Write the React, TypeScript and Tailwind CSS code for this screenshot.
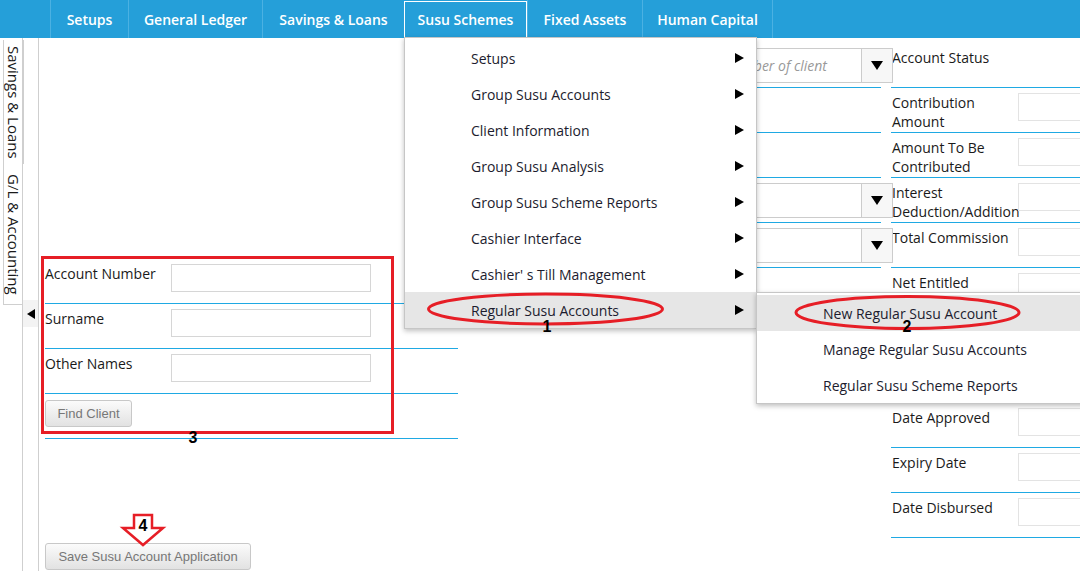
import type { ReactNode } from 'react';

const navItems = [
  { label: 'Setups', w: 'w-[78px]' },
  { label: 'General Ledger', w: 'w-[134px]' },
  { label: 'Savings & Loans', w: 'w-[142px]' },
  { label: 'Susu Schemes', w: 'w-[123px]', active: true },
  { label: 'Fixed Assets', w: 'w-[115px]' },
  { label: 'Human Capital', w: 'w-[131px]' },
];

const menuItems = [
  'Setups',
  'Group Susu Accounts',
  'Client Information',
  'Group Susu Analysis',
  'Group Susu Scheme Reports',
  'Cashier Interface',
  "Cashier' s Till Management",
  'Regular Susu Accounts',
];

const subItems = ['New Regular Susu Account', 'Manage Regular Susu Accounts', 'Regular Susu Scheme Reports'];

const rightRows: { key: string; label: ReactNode; input: boolean }[] = [
  { key: 'status', label: 'Account Status', input: false },
  { key: 'contrib', label: <>Contribution<br />Amount</>, input: true },
  { key: 'tobe', label: <>Amount To Be<br />Contributed</>, input: true },
  { key: 'interest', label: <>Interest<br />Deduction/Addition</>, input: true },
  { key: 'commission', label: 'Total Commission', input: true },
  { key: 'net', label: 'Net Entitled', input: true },
  { key: 'approvedamt', label: 'Amount Approved', input: true },
  { key: 'appdate', label: 'Application Date', input: true },
  { key: 'approved', label: 'Date Approved', input: true },
  { key: 'expiry', label: 'Expiry Date', input: true },
  { key: 'disbursed', label: 'Date Disbursed', input: true },
];

function Caret() {
  return (
    <svg width="9" height="10" viewBox="0 0 9 10" className="shrink-0">
      <path d="M0 0 L9 5 L0 10 Z" fill="#000" />
    </svg>
  );
}

function DropSelect({ text }: { text?: string }) {
  return (
    <div className="relative z-[1] ml-auto -mr-[12px] flex h-[35px] w-[300px] border border-[#ccc] bg-white">
      <div className="flex flex-1 items-center justify-end overflow-hidden whitespace-nowrap pr-[34px] text-[14px] italic text-[#999]">
        {text}
      </div>
      <div className="flex w-[31px] items-center justify-center border-l border-[#ccc] bg-[#f7f7f7]">
        <svg width="12" height="9" viewBox="0 0 12 9">
          <path d="M0 0 H12 L6 9 Z" fill="#000" />
        </svg>
      </div>
    </div>
  );
}

function GrayButton({ children, w }: { children: string; w: string }) {
  return (
    <button
      className={`${w} h-[27px] rounded-[3px] border border-[#c8c8c8] bg-gradient-to-b from-[#fbfbfb] to-[#e2e2e2] font-['Liberation_Sans',Arial,sans-serif] text-[13px] text-[#777]`}
    >
      {children}
    </button>
  );
}

export default function App() {
  return (
    <div className="relative h-[571px] w-[1080px] overflow-hidden bg-white font-['Open_Sans',sans-serif] text-[14px] leading-[19px] text-[#1a1a1a]">
      <nav className="flex h-[38px] bg-[#259fd9] pl-[50px]">
        {navItems.map((n) => (
          <div
            key={n.label}
            className={`${n.w} flex items-center justify-center whitespace-nowrap text-[14px] font-semibold text-white ${
              n.active ? 'mt-[1px] h-[37px] border border-white' : 'border-l border-[#4bb1e2] last:border-r'
            }`}
          >
            {n.label}
          </div>
        ))}
      </nav>

      <div className="flex h-[533px]">
        <aside className="w-[23px] shrink-0 border-r border-[#cfcfcf] pt-[2px] text-[15px]">
          <div className="ml-[3px] flex h-[124px] items-center justify-center border-y border-l border-[#cfcfcf] [writing-mode:vertical-rl]">
            Savings &amp; Loans
          </div>
          <div className="ml-[3px] flex h-[141px] items-center justify-center border-b border-l border-[#cfcfcf] [writing-mode:vertical-rl]">
            G/L &amp; Accounting
          </div>
        </aside>
        <div className="w-[16px] shrink-0 border-r border-[#cfcfcf] pt-[262px]">
          <div className="flex h-[27px] items-center justify-center bg-[#f3f3f3]">
            <svg width="8" height="10" viewBox="0 0 8 10">
              <path d="M8 0 L0 5 L8 10 Z" fill="#000" />
            </svg>
          </div>
        </div>

        <main className="flex flex-1 gap-[10px] overflow-hidden pl-[6px] pt-[5px]">
          {/* left column */}
          <section className="w-[413px] shrink-0">
            <div className="h-[216px]" />
            {['Account Number', 'Surname', 'Other Names'].map((l) => (
              <div key={l} className="flex h-[45px] border-b border-[#1fa9e3]">
                <div className="w-[126px] pt-[5px]">{l}</div>
                <div className="mt-[5px] h-[28px] w-[200px] border border-[#d6d6d6]" />
              </div>
            ))}
            <div className="h-[45px] border-b border-[#1fa9e3] pt-[6px]">
              <GrayButton w="w-[87px]">Find Client</GrayButton>
            </div>
            <div className="mt-[104px]">
              <GrayButton w="w-[206px]">Save Susu Account Application</GrayButton>
            </div>
          </section>

          {/* middle column */}
          <section className="w-[413px] shrink-0">
            <div className="h-[45px] border-b border-[#1fa9e3] pt-[5px]">
              <DropSelect text="Type the name or account number of client" />
            </div>
            <div className="h-[45px] border-b border-[#1fa9e3]" />
            <div className="h-[45px] border-b border-[#1fa9e3]" />
            <div className="h-[45px] border-b border-[#1fa9e3] pt-[5px]">
              <DropSelect />
            </div>
            <div className="h-[45px] border-b border-[#1fa9e3] pt-[5px]">
              <DropSelect />
            </div>
            <div className="h-[45px] border-b border-[#1fa9e3]" />
          </section>

          {/* right column */}
          <section className="w-[413px] shrink-0">
            {rightRows.map((r) => (
              <div key={r.key} className="flex h-[45px] border-b border-[#1fa9e3]">
                <div className="w-[127px] shrink-0 whitespace-nowrap pl-[1px] pt-[5px]">{r.label}</div>
                {r.input && <div className="mt-[5px] h-[28px] w-[200px] border border-[#e3e3e3]" />}
              </div>
            ))}
          </section>
        </main>
      </div>

      {/* dropdown menu */}
      <div className="absolute left-[404px] top-[37px] z-10 w-[353px] border border-[#c6c6c6] bg-white pt-[2px] shadow-[0_2px_5px_rgba(0,0,0,0.25)]">
        {menuItems.map((m, i) => (
          <div
            key={m}
            className={`flex h-[36px] items-center pl-[66px] pr-[12px] text-[#1c1c2e] ${
              i === menuItems.length - 1 ? 'bg-[#e6e6e6]' : ''
            }`}
          >
            <span className="flex-1">{m}</span>
            <Caret />
          </div>
        ))}
      </div>

      {/* submenu */}
      <div className="absolute left-[756px] top-[292px] z-10 w-[340px] border border-[#c6c6c6] bg-white pt-[2px] shadow-[0_2px_5px_rgba(0,0,0,0.25)]">
        {subItems.map((s, i) => (
          <div key={s} className={`flex h-[36px] items-center pl-[66px] text-[#1c1c2e] ${i === 0 ? 'bg-[#e6e6e6]' : ''}`}>
            {s}
          </div>
        ))}
      </div>

      {/* annotations */}
      <svg className="pointer-events-none absolute left-0 top-0 z-20" width="1080" height="571" viewBox="0 0 1080 571">
        <g fill="none" stroke="#e61e26" strokeWidth="3">
          <ellipse cx="545.5" cy="309" rx="117" ry="15" />
          <ellipse cx="907.5" cy="312.5" rx="111.5" ry="16" />
          <rect x="42.5" y="257.5" width="350" height="175" />
        </g>
        <polygon points="134,515 152,515 152,528 163,528 143,545 123,528 134,528" fill="#fff" stroke="#e61e26" strokeWidth="2.5" />
        <g fontFamily="Liberation Sans, Arial, sans-serif" fontWeight="bold" fontSize="16" fill="#000" textAnchor="middle">
          <text x="547" y="332">1</text>
          <text x="907" y="332">2</text>
          <text x="193" y="443">3</text>
          <text x="143" y="531">4</text>
        </g>
      </svg>
    </div>
  );
}
